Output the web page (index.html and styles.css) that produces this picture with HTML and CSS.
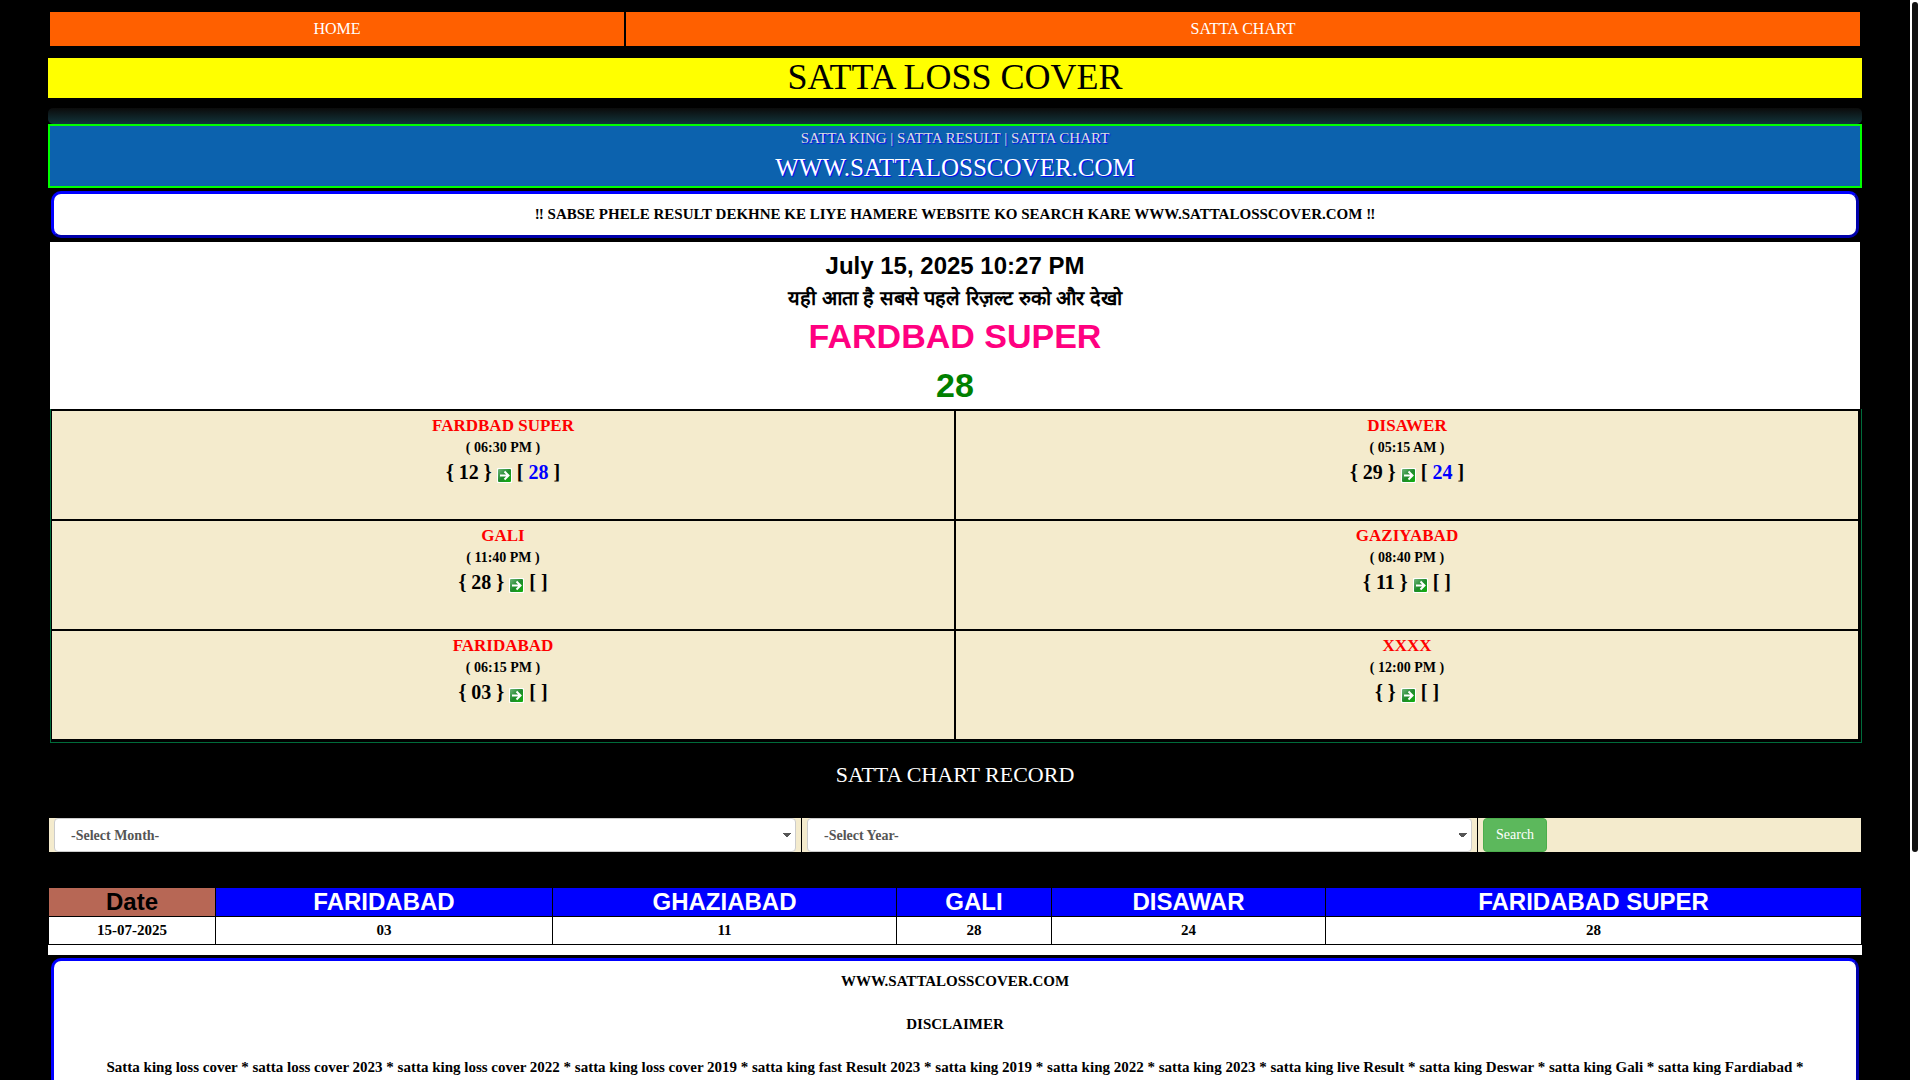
FILE: index.html
```html
<!DOCTYPE html>
<html lang="en">
<head>
<meta charset="utf-8">
<meta name="viewport" content="width=device-width, initial-scale=1">
<title>Satta Loss Cover</title>
<link rel="stylesheet" href="styles.css">
</head>
<body>
<svg class="sprite" aria-hidden="true">
  <defs>
    <linearGradient id="arrow-green" x1="0" y1="0" x2="1" y2="1">
      <stop offset="0" stop-color="#6fb57b"/>
      <stop offset="0.5" stop-color="#1f8a2c"/>
      <stop offset="1" stop-color="#11b30b"/>
    </linearGradient>
  </defs>
  <symbol id="arrow" viewBox="0 0 15 15">
    <rect width="15" height="15" rx="1" fill="#fff"/>
    <rect x="1" y="1" width="13" height="13" rx="1" fill="url(#arrow-green)"/>
    <path d="M3 7.5h8M7.5 3.5l4 4-4 4" fill="none" stroke="#fff" stroke-width="2"/>
  </symbol>
</svg>
<div class="viewport">
  <div class="page">
    <nav class="nav">
      <a class="nav-link" href="#">HOME</a>
      <a class="nav-link" href="#chart">SATTA CHART</a>
    </nav>
    <h1 class="title">SATTA LOSS COVER</h1>
    <div class="strip"></div>
    <header class="banner">
      <p class="banner-tags">SATTA KING | SATTA RESULT | SATTA CHART</p>
      <p class="banner-site">WWW.SATTALOSSCOVER.COM</p>
    </header>
    <p class="panel notice">‼ SABSE PHELE RESULT DEKHNE KE LIYE HAMERE WEBSITE KO SEARCH KARE WWW.SATTALOSSCOVER.COM ‼</p>
    <section class="latest">
      <p class="latest-date">July 15, 2025 10:27 PM</p>
      <p class="latest-note" lang="hi">यही आता है सबसे पहले रिज़ल्ट रुको और देखो</p>
      <h2 class="latest-name">FARDBAD SUPER</h2>
      <p class="latest-number">28</p>
    </section>
    <section class="games">
      <article class="game"><h3 class="game-name">FARDBAD SUPER</h3><p class="game-time">( 06:30 PM )</p><p class="game-result">{ 12 } <svg class="arrow"><use href="#arrow"/></svg> [ <span class="today">28</span> ]</p></article>
      <article class="game"><h3 class="game-name">DISAWER</h3><p class="game-time">( 05:15 AM )</p><p class="game-result">{ 29 } <svg class="arrow"><use href="#arrow"/></svg> [ <span class="today">24</span> ]</p></article>
      <article class="game"><h3 class="game-name">GALI</h3><p class="game-time">( 11:40 PM )</p><p class="game-result">{ 28 } <svg class="arrow"><use href="#arrow"/></svg> [ ]</p></article>
      <article class="game"><h3 class="game-name">GAZIYABAD</h3><p class="game-time">( 08:40 PM )</p><p class="game-result">{ 11 } <svg class="arrow"><use href="#arrow"/></svg> [ ]</p></article>
      <article class="game"><h3 class="game-name">FARIDABAD</h3><p class="game-time">( 06:15 PM )</p><p class="game-result">{ 03 } <svg class="arrow"><use href="#arrow"/></svg> [ ]</p></article>
      <article class="game"><h3 class="game-name">XXXX</h3><p class="game-time">( 12:00 PM )</p><p class="game-result">{ } <svg class="arrow"><use href="#arrow"/></svg> [ ]</p></article>
    </section>
    <h2 class="record-title" id="chart">SATTA CHART RECORD</h2>
    <form class="search">
      <div class="search-cell"><select class="select" aria-label="Month"><option>-Select Month-</option></select></div>
      <div class="search-cell"><select class="select" aria-label="Year"><option>-Select Year-</option></select></div>
      <div class="search-cell"><button class="button" type="submit">Search</button></div>
    </form>
    <div class="chart-wrap">
      <table class="chart">
        <colgroup><col class="c-date"><col class="c-fari"><col class="c-ghaz"><col class="c-gali"><col class="c-disa"><col></colgroup>
        <thead><tr><th class="date-head">Date</th><th>FARIDABAD</th><th>GHAZIABAD</th><th>GALI</th><th>DISAWAR</th><th>FARIDABAD SUPER</th></tr></thead>
        <tbody><tr><td>15-07-2025</td><td>03</td><td>11</td><td>28</td><td>24</td><td>28</td></tr></tbody>
      </table>
    </div>
    <footer class="panel disclaimer">
      <p>WWW.SATTALOSSCOVER.COM</p>
      <p>DISCLAIMER</p>
      <p>Satta king loss cover * satta loss cover 2023 * satta king loss cover 2022 * satta king loss cover 2019 * satta king fast Result 2023 * satta king 2019 * satta king 2022 * satta king 2023 * satta king live Result * satta king Deswar * satta king Gali * satta king Fardiabad *</p>
    </footer>
  </div>
  <div class="scrollbar" aria-hidden="true"><div class="thumb"></div></div>
</div>
</body>
</html>
```
FILE: styles.css
```css
* { box-sizing: border-box; }
body { margin: 0; background: #000; font-family: "Liberation Serif", "Times New Roman", serif; font-size: 14px; line-height: 20px; color: #000; }
h1, h2, h3, p { margin: 0; font-weight: normal; }
.sprite { position: absolute; width: 0; height: 0; }
.viewport { display: flex; height: 100vh; overflow: hidden; }
.page { flex: 1; min-width: 0; padding: 10px 48px 0; overflow: hidden; text-align: center; }
.scrollbar { flex: 0 0 10px; padding: 2px; background: #fff; }
.thumb { height: 79%; border-radius: 3px; background: #111; }

.nav { display: grid; grid-template-columns: 574fr 1234fr; gap: 2px; padding: 2px; }
.nav-link { background: #ff6000; color: #fff; font-size: 16px; line-height: 34px; text-decoration: none; }
.title { margin-top: 10px; padding-bottom: 2px; background: #ff0; font-size: 36px; line-height: 38px; }
.strip { height: 16px; margin-top: 10px; border-radius: 5px; background: linear-gradient(#0b0b0b, #12353c); }
.banner { height: 64px; border: 2px solid #0f0; background: #0c62ae; color: #fff; text-shadow: 1px 1px 1px #00f; }
.banner-tags { padding-top: 2px; font-size: 15px; line-height: 20px; color: #ddd; }
.banner-site { font-size: 25px; line-height: 40px; }
.panel { margin: 3px 3px 0; border: 3px outset #00f; border-radius: 10px; background: #fff; font-size: 15px; font-weight: bold; }
.notice { line-height: 41px; }

.latest { margin: 4px 2px 0; padding-top: 8px; height: 167px; background: #fff; font-family: "Liberation Sans", Arial, sans-serif; }
.latest-date { font-size: 24px; line-height: 32px; font-weight: bold; }
.latest-note { font-size: 20px; line-height: 32px; font-weight: bold; }
.latest-name { font-size: 34px; line-height: 44px; font-weight: bold; color: #ff0080; }
.latest-number { font-size: 34px; line-height: 54px; font-weight: bold; color: #008000; }

.games { display: grid; grid-template-columns: 1fr 1fr; gap: 2px; margin: 0 0 0 2px; padding: 2px 3px 3px 1px; border: 1px solid #006b3a; border-top: 0; background: #000; }
.game { height: 108px; padding-top: 5px; background: #f4ebcd; }
.game-name { color: #f00; font-size: 17px; line-height: 20px; font-weight: bold; }
.game-time { font-size: 14px; line-height: 24px; font-weight: bold; }
.game-result { font-size: 20px; line-height: 24px; font-weight: bold; }
.arrow { width: 15px; height: 15px; vertical-align: -4px; }
.today { color: #00f; }

.record-title { padding: 18px 0; font-size: 22px; line-height: 28px; color: #fff; margin-bottom: 11px; }
.search { display: grid; grid-template-columns: 752fr 675fr 383fr; gap: 1px; margin: 0 1px; }
.search-cell { height: 34px; padding: 0 5px; background: #f4ebcd; }
.select {
  display: block;
  width: 100%;
  height: 34px;
  padding: 2px 16px 0;
  border: 1px solid #ccc;
  border-radius: 4px;
  appearance: none;
  color: #555;
  font: bold 14px/20px "Liberation Serif", "Times New Roman", serif;
  background:
    linear-gradient(to top right, transparent 50%, #555 50%) right 8px center / 5px 5px no-repeat,
    linear-gradient(to top left, transparent 50%, #555 50%) right 3px center / 5px 5px no-repeat,
    #fff;
}
.button { display: block; height: 34px; padding: 0 12px; border: 1px solid #4cae4c; border-radius: 4px; background: #5cb85c; color: #fff; font: 14px/20px "Liberation Serif", "Times New Roman", serif; }

.chart-wrap { margin-top: 35px; padding-bottom: 10px; background: #fff; }
.chart { width: 100%; table-layout: fixed; border-collapse: collapse; font-weight: bold; }
.chart th, .chart td { border: 1px solid #000; padding: 0; }
.chart th { height: 29px; background: #00f; color: #fff; font: bold 24px/28px "Liberation Sans", Arial, sans-serif; }
.chart .date-head { background: #b76755; color: #000; }
.chart td { height: 28px; font-size: 15px; line-height: 27px; }
.c-date { width: 167px; }
.c-fari { width: 337px; }
.c-ghaz { width: 344px; }
.c-gali { width: 155px; }
.c-disa { width: 274px; }
.disclaimer { padding: 10px 20px; }
.disclaimer p { line-height: 21px; margin-bottom: 22px; font-weight: bold; }
```
